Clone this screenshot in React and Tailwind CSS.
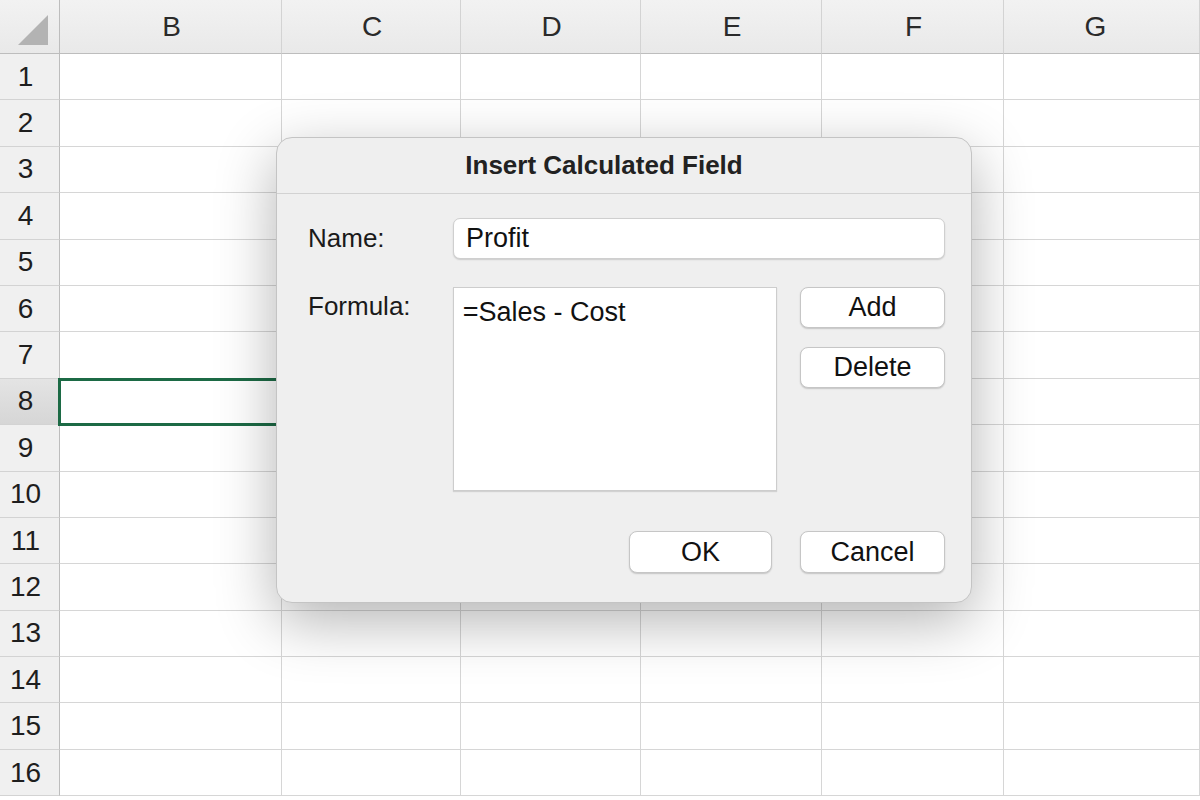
const cols = ["B", "C", "D", "E", "F", "G"];
const rows = Array.from({ length: 16 }, (_, i) => i + 1);

const Btn = ({ children, className = "" }) => (
  <button
    className={
      "h-[41px] rounded-[8px] border border-[#c6c6c6] bg-white text-[27px] leading-none text-[#111] shadow-[0_1px_1.5px_rgba(0,0,0,0.18)] " +
      className
    }
  >
    {children}
  </button>
);

const App = () => {
  return (
    <div
      className="relative w-[1200px] h-[800px] overflow-hidden bg-white text-[#1c1c1c]"
      style={{ fontFamily: '"Liberation Sans", Arial, sans-serif' }}
    >
      <div className="grid grid-cols-[60px_222px_179px_180px_181px_182px_196px] grid-rows-[54px_repeat(16,46.4px)]">
        {/* header row */}
        <div className="relative border-r border-b border-[#bdbdbd] bg-gradient-to-b from-[#f2f2f2] to-[#e9e9e9]">
          <svg className="absolute left-0 top-0" width="60" height="54">
            <polygon points="18,45 48,45 48,15" fill="#b3b3b3" />
          </svg>
        </div>
        {cols.map((c) => (
          <div
            key={c}
            className={
              "flex items-center justify-center border-r border-b border-r-[#d3d3d3] border-b-[#bdbdbd] bg-gradient-to-b from-[#f2f2f2] to-[#e9e9e9] text-[28px] text-[#2a2a2a] " +
              (c === "G" ? "pr-[12px]" : "pl-[2px]")
            }
          >
            {c}
          </div>
        ))}

        {rows.map((r) => (
          <div key={r} className="contents">
            <div
              className={
                "flex items-center justify-center pr-[8px] border-r border-b border-r-[#bdbdbd] border-b-[#d3d3d3] text-[28px] text-[#1e1e1e] " +
                (r === 8
                  ? "bg-gradient-to-b from-[#e4e4e4] to-[#d6d6d6]"
                  : "bg-[#f0f0f0]")
              }
            >
              {r}
            </div>
            {cols.map((c) => (
              <div
                key={c}
                className={
                  "border-r border-b border-[#d6d6d6] " +
                  (r === 8 && c === "B"
                    ? "relative z-10 outline-[3px] outline-[#1c6a45] -outline-offset-2 -ml-px"
                    : "")
                }
              />
            ))}
          </div>
        ))}
      </div>

      {/* dialog */}
      <div className="absolute left-[276px] top-[137px] z-20 flex h-[466px] w-[696px] flex-col rounded-[16px] border border-[#c4c4c4] bg-[#efefef] shadow-[0_18px_60px_rgba(0,0,0,0.3)]">
        <div className="flex h-[56px] shrink-0 items-center justify-center border-b border-[#d2d2d2] pr-[40px] text-[26px] font-bold text-[#222]">
          Insert Calculated Field
        </div>

        <div className="flex flex-1 flex-col pl-[31px] pr-[26px] pt-[24px] pb-[29px]">
          <div className="flex items-center">
            <div className="w-[145px] text-[26px] text-[#1a1a1a]">Name:</div>
            <div className="flex h-[41px] flex-1 items-center rounded-[7px] border border-[#cfcfcf] bg-white pl-[12px] text-[27px] text-[#111] shadow-[0_1px_1.5px_rgba(0,0,0,0.15)]">
              Profit
            </div>
          </div>

          <div className="mt-[28px] flex">
            <div className="w-[145px] text-[26px] text-[#1a1a1a]">Formula:</div>
            <div className="h-[204px] w-[325px] border border-[#cdcdcd] bg-white pl-[9px] pt-[8px] text-[27px] leading-[32px] text-[#111] shadow-[0_1px_1px_rgba(0,0,0,0.12)]">
              =Sales - Cost
            </div>
            <div className="ml-[23px] flex flex-col gap-[19px]">
              <Btn className="w-[145px]">Add</Btn>
              <Btn className="w-[145px]">Delete</Btn>
            </div>
          </div>

          <div className="mt-auto flex justify-end gap-[28px]">
            <Btn className="h-[42px] w-[143px]">OK</Btn>
            <Btn className="h-[42px] w-[145px]">Cancel</Btn>
          </div>
        </div>
      </div>
    </div>
  );
};

export default App;
